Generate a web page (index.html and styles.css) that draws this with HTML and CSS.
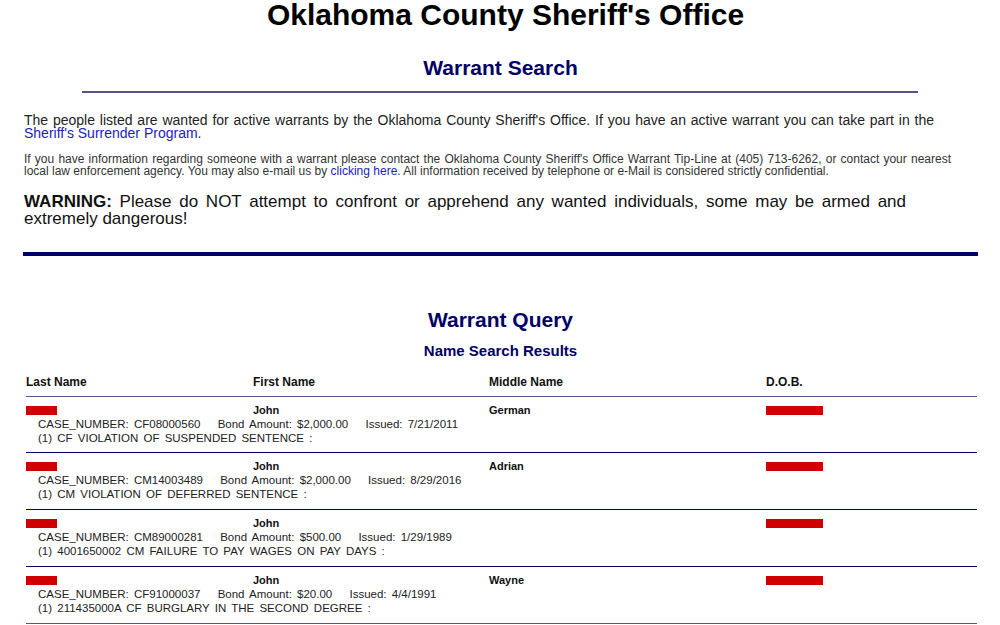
FILE: index.html
```html
<!DOCTYPE html>
<html>
<head>
<meta charset="utf-8">
<link rel="stylesheet" href="styles.css">
</head>
<body>
<div class="page">
  <h1 class="title">Oklahoma County Sheriff's Office</h1>
  <h2 class="subtitle">Warrant Search</h2>
  <hr class="thin">
  <p class="intro">The people listed are wanted for active warrants by the Oklahoma County Sheriff's Office. If you have an active warrant you can take part in the <a href="#">Sheriff's Surrender Program</a>.</p>
  <p class="small">If you have information regarding someone with a warrant please contact the Oklahoma County Sheriff's Office Warrant Tip-Line at (405) 713-6262, or contact your nearest local law enforcement agency. You may also e-mail us by <a href="#">clicking here</a>. All information received by telephone or e-Mail is considered strictly confidential.</p>
  <p class="warning"><b>WARNING:</b> Please do NOT attempt to confront or apprehend any wanted individuals, some may be armed and extremely dangerous!</p>
  <hr class="thick">

  <h2 class="query">Warrant Query</h2>
  <h3 class="results">Name Search Results</h3>

  <div class="table">
    <div class="head">
      <span>Last Name</span><span>First Name</span><span>Middle Name</span><span>D.O.B.</span>
    </div>

    <div class="row">
      <div class="names">
        <span><i class="redact short"></i></span><span class="b">John</span><span class="b">German</span><span><i class="redact long"></i></span>
      </div>
      <div class="detail">CASE_NUMBER: CF08000560 <span class="field">Bond Amount: $2,000.00</span> <span class="field">Issued: 7/21/2011</span></div>
      <div class="detail">(1) CF VIOLATION OF SUSPENDED SENTENCE :</div>
    </div>

    <div class="row">
      <div class="names">
        <span><i class="redact short"></i></span><span class="b">John</span><span class="b">Adrian</span><span><i class="redact long"></i></span>
      </div>
      <div class="detail">CASE_NUMBER: CM14003489 <span class="field">Bond Amount: $2,000.00</span> <span class="field">Issued: 8/29/2016</span></div>
      <div class="detail">(1) CM VIOLATION OF DEFERRED SENTENCE :</div>
    </div>

    <div class="row">
      <div class="names">
        <span><i class="redact short"></i></span><span class="b">John</span><span class="b"></span><span><i class="redact long"></i></span>
      </div>
      <div class="detail">CASE_NUMBER: CM89000281 <span class="field">Bond Amount: $500.00</span> <span class="field">Issued: 1/29/1989</span></div>
      <div class="detail">(1) 4001650002 CM FAILURE TO PAY WAGES ON PAY DAYS :</div>
    </div>

    <div class="row">
      <div class="names">
        <span><i class="redact short"></i></span><span class="b">John</span><span class="b">Wayne</span><span><i class="redact long"></i></span>
      </div>
      <div class="detail">CASE_NUMBER: CF91000037 <span class="field">Bond Amount: $20.00</span> <span class="field">Issued: 4/4/1991</span></div>
      <div class="detail">(1) 211435000A CF BURGLARY IN THE SECOND DEGREE :</div>
    </div>
  </div>
</div>
</body>
</html>
```

FILE: styles.css
```css
html, body {
  margin: 0;
  padding: 0;
  background: #fff;
}
body {
  font-family: "Liberation Sans", Arial, sans-serif;
  color: #1a1a1a;
}
.page {
  width: 955px;
  margin: 0 0 0 23px;
}
.title {
  margin: 0;
  padding-left: 10px;
  text-align: center;
  font-size: 30px;
  line-height: 30px;
  font-weight: bold;
  color: #000;
}
.subtitle {
  margin: 26px 0 0;
  text-align: center;
  font-size: 21px;
  line-height: 24px;
  color: #000066;
}
.thin {
  margin: 11px 60px 0 59px;
  border: 0;
  height: 2px;
  background: #55558a;
}
.intro {
  margin: 21px 44px 0 1px;
  font-size: 14px;
  line-height: 13px;
  text-align: justify;
  color: #222;
}
a {
  color: #2222bb;
  text-decoration: none;
}
.small {
  margin: 13px 27px 0 1px;
  font-size: 12px;
  line-height: 12px;
  text-align: justify;
  color: #333;
}
.warning {
  margin: 16px 72px 0 1px;
  font-size: 17px;
  line-height: 17px;
  text-align: justify;
  color: #111;
}
.thick {
  margin: 25px 0 0;
  border: 0;
  height: 4px;
  background: #000066;
}
.query {
  margin: 52px 0 0;
  text-align: center;
  font-size: 21px;
  line-height: 24px;
  color: #000066;
}
.results {
  margin: 10px 0 0;
  text-align: center;
  font-size: 15px;
  line-height: 18px;
  color: #000066;
}
.table {
  margin: 15px 0 0 3px;
  width: 951px;
}
.head, .names {
  display: grid;
  grid-template-columns: 227px 236px 277px 1fr;
  font-weight: bold;
  line-height: 14px;
  color: #111;
}
.head {
  font-size: 12px;
  padding-bottom: 7px;
  border-bottom: 1px solid #55558a;
}
.names {
  font-size: 11px;
}
.row {
  height: 57px;
  padding-top: 6px;
  box-sizing: border-box;
  border-top: 1px solid #000066;
}
.head + .row {
  border-top: 0;
  height: 55px;
  padding-top: 6px;
}
.row:last-child {
  border-bottom: 1px solid #55558a;
  height: 58px;
}
.names span {
  display: flex;
  align-items: center;
  height: 14px;
}
.redact {
  display: block;
  height: 9px;
  background: #d00000;
}
.redact.short { width: 31px; }
.redact.long { width: 57px; }
.detail {
  padding-left: 12px;
  font-size: 11.5px;
  line-height: 14px;
  color: #222;
  word-spacing: 2px;
}
.field {
  margin-left: 12px;
}
```
